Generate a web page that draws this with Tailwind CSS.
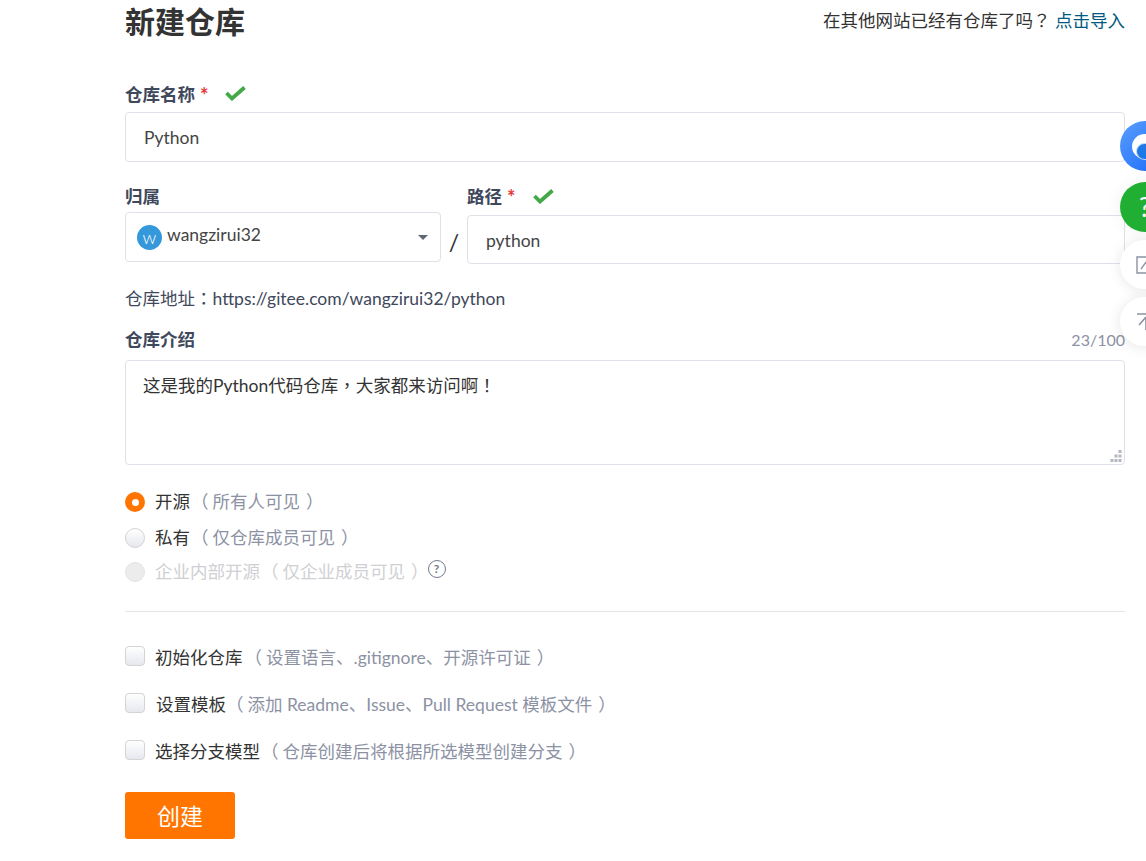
<!DOCTYPE html>
<html lang="zh-CN">
<head>
  <meta charset="UTF-8" />
  <title>新建仓库 - Gitee</title>
  <script src="https://cdn.jsdelivr.net/npm/@tailwindcss/browser@4"></script>
</head>
<body class="relative h-[861px] overflow-hidden bg-white text-[17.5px] text-[#40485b] font-['Lato','Noto_Sans_CJK_SC',sans-serif]">

  <main class="ml-[125px] w-[1000px]">
    <!-- header -->
    <div class="flex h-[44px] items-center justify-between">
      <h1 class="mb-[2px] text-[30px] font-bold leading-[44px] text-[#333]">新建仓库</h1>
      <p class="text-[#333] mb-[3px]">在其他网站已经有仓库了吗<span lang="zh-TW" class="font-['Noto_Sans_CJK_TC']">？</span> <a href="#" class="text-[#005980]">点击导入</a></p>
    </div>

    <!-- name -->
    <div class="mt-[38px] flex h-[24px] items-center font-bold">
      <span class="mt-[2px]">仓库名称</span> <span class="ml-[5px] mt-[2px] text-[20px] leading-none text-[#e53935]">*</span>
      <svg class="ml-[16px] mb-[2px]" width="21" height="16" viewBox="0 0 21 16"><path d="M1.5 8l5.5 5.5L19.5 2.5" fill="none" stroke="#43a846" stroke-width="3.8"/></svg>
    </div>
    <input value="Python" class="mt-[6px] block h-[50px] w-full rounded-[4px] border border-[#dfe1e8] px-[18px] text-[#444]" />

    <!-- owner / path -->
    <div class="mt-[23px] flex">
      <div class="w-[316px]">
        <div class="h-[24px] font-bold leading-[24px]">归属</div>
        <div class="mt-[3px] flex h-[50px] items-center rounded-[4px] border border-[#dfe1e8] pl-[11px] pr-[12px]">
          <span class="flex h-[25px] w-[25px] items-center justify-center rounded-full bg-[#3498db] text-[18px] font-light leading-none text-white">w</span>
          <span class="ml-[5px] mb-[3px] text-[#444]">wangzirui32</span>
          <span class="ml-auto h-0 w-0 border-x-[5px] border-t-[5px] border-x-transparent border-t-[#5f6674]"></span>
        </div>
      </div>
      <div class="flex w-[26px] items-end justify-center pb-[4px] text-[23px] leading-[36px] text-[#333]">/</div>
      <div class="flex-1">
        <div class="flex h-[24px] items-center font-bold">
          路径 <span class="ml-[5px] text-[20px] leading-none text-[#e53935]">*</span>
          <svg class="ml-[17px] mb-[2px]" width="21" height="16" viewBox="0 0 21 16"><path d="M1.5 8l5.5 5.5L19.5 2.5" fill="none" stroke="#43a846" stroke-width="3.8"/></svg>
        </div>
        <input value="python" class="mt-[6px] block h-[49px] w-full rounded-[4px] border border-[#dfe1e8] px-[18px] pt-[2px] text-[#444]" />
      </div>
    </div>

    <p class="mt-[22px] h-[24px] leading-[24px]">仓库地址<span lang="zh-TW" class="font-['Noto_Sans_CJK_TC']">：</span>https://gitee.com/wangzirui32/python</p>

    <!-- description -->
    <div class="mt-[18px] flex h-[24px] items-center justify-between">
      <span class="font-bold">仓库介绍</span>
      <span class="text-base text-[#8c92a4]">23/100</span>
    </div>
    <div class="relative mt-[8px] h-[105px]">
      <div class="h-full rounded-[4px] border border-[#dfe1e8] px-[17px] py-[11px] text-[#333]">这是我的Python代码仓库<span lang="zh-TW" class="font-['Noto_Sans_CJK_TC']">，</span>大家都来访问啊<span lang="zh-TW" class="font-['Noto_Sans_CJK_TC']">！</span></div>
      <svg class="absolute bottom-[3px] right-[3px]" width="12" height="12" viewBox="0 0 12 12" fill="#b4b7c0"><rect x="8.5" y="0" width="3" height="3"/><rect x="4.5" y="4.5" width="3" height="3"/><rect x="8.5" y="4.5" width="3" height="3"/><rect x="0.5" y="9" width="3" height="3"/><rect x="4.5" y="9" width="3" height="3"/><rect x="8.5" y="9" width="3" height="3"/></svg>
    </div>

    <!-- visibility -->
    <div class="mt-[25px] flex h-[24px] items-center text-[#333]">
      <span class="flex h-5 w-5 items-center justify-center rounded-full bg-[#ff7500]"><span class="h-[7px] w-[7px] rounded-full bg-white"></span></span>
      <span class="ml-[10px]">开源</span><span class="ml-[5px] text-[#8c92a4]"><span class="relative right-[4px]">（</span>所有人可见<span class="relative left-[6px]">）</span></span>
    </div>
    <div class="mt-[12px] flex h-[24px] items-center text-[#333]">
      <span class="h-5 w-5 rounded-full border border-[#d4d4d5] bg-gradient-to-b from-white to-[#e6e8ee]"></span>
      <span class="ml-[10px]">私有</span><span class="ml-[5px] text-[#8c92a4]"><span class="relative right-[4px]">（</span>仅仓库成员可见<span class="relative left-[6px]">）</span></span>
    </div>
    <div class="mt-[10px] flex h-[24px] items-center text-[#cfd0d3]">
      <span class="h-5 w-5 rounded-full border border-[#e4e4e4] bg-[#ececec]"></span>
      <span class="ml-[10px]">企业内部开源</span><span class="ml-[5px]"><span class="relative right-[4px]">（</span>仅企业成员可见<span class="relative left-[6px]">）</span></span>
      <span class="ml-[5px] mb-[6px] flex h-[18px] w-[18px] items-center justify-center rounded-full border-[1.5px] border-[#737a8e] text-[12px] font-bold leading-none text-[#737a8e]">?</span>
    </div>

    <hr class="mt-[27px] border-[#e3e4e8]" />

    <!-- options -->
    <div class="mt-[33px] flex h-[24px] items-center text-[#333]">
      <span class="mb-[3px] h-5 w-5 rounded-[4px] border border-[#d4d4d5] bg-gradient-to-b from-white to-[#e6e8ee]"></span>
      <span class="ml-[10px] mt-[2px]">初始化仓库</span><span class="ml-[6px] mt-[2px] text-[#8c92a4]"><span class="relative right-[4px]">（</span>设置语言、.gitignore、开源许可证<span class="relative left-[6px]">）</span></span>
    </div>
    <div class="mt-[23px] flex h-[24px] items-center text-[#333]">
      <span class="mb-[3px] h-5 w-5 rounded-[4px] border border-[#d4d4d5] bg-gradient-to-b from-white to-[#e6e8ee]"></span>
      <span class="ml-[11px] mt-[2px]">设置模板</span><span class="ml-[4px] mt-[2px] text-[#8c92a4]"><span class="relative right-[4px]">（</span>添加 Readme、Issue、Pull Request 模板文件<span class="relative left-[6px]">）</span></span>
    </div>
    <div class="mt-[23px] flex h-[24px] items-center text-[#333]">
      <span class="mb-[3px] h-5 w-5 rounded-[4px] border border-[#d4d4d5] bg-gradient-to-b from-white to-[#e6e8ee]"></span>
      <span class="ml-[10px] mt-[2px]">选择分支模型</span><span class="ml-[5px] mt-[2px] text-[#8c92a4]"><span class="relative right-[4px]">（</span>仓库创建后将根据所选模型创建分支<span class="relative left-[6px]">）</span></span>
    </div>

    <button class="mt-[29px] h-[47px] w-[110px] rounded-[3px] bg-[#ff7500] pt-[2px] text-[23px] text-white">创建</button>
  </main>

  <!-- floating buttons -->
  <div class="absolute left-[1120px] top-[121px] flex flex-col">
    <div class="relative h-[50px] w-[50px] overflow-hidden rounded-full bg-gradient-to-br from-[#5a9dff] to-[#1267f5]">
      <span class="absolute left-[12px] top-[13px] h-[25px] w-[30px] rounded-full bg-white"></span>
      <span class="absolute left-[16px] top-[22px] h-[17px] w-[24px] rounded-full border border-white/70 bg-[#1f78e8]"></span>
    </div>
    <div class="mt-[11px] flex h-[50px] w-[50px] items-center rounded-full bg-[#21af33] pl-[19px] text-[26px] text-white shadow-[0_0_18px_rgba(0,0,0,0.06)]">?</div>
    <div class="mt-[8px] flex h-[49px] w-[50px] items-center rounded-full bg-white pl-[16px] shadow-[0_1px_14px_rgba(0,0,0,0.1)]">
      <svg width="20" height="20" viewBox="0 0 20 20" fill="none" stroke="#8c92a4" stroke-width="1.4"><path d="M1 2h14v16H1z"/><path d="M5 14L13 3"/></svg>
    </div>
    <div class="mt-[8px] flex h-[49px] w-[50px] items-center rounded-full bg-white pl-[17px] shadow-[0_1px_14px_rgba(0,0,0,0.1)]">
      <svg width="20" height="20" viewBox="0 0 20 20" fill="none" stroke="#8c92a4" stroke-width="1.6"><path d="M0 2h18M9 5v13M9 5L2 13"/></svg>
    </div>
  </div>
</body>
</html>
